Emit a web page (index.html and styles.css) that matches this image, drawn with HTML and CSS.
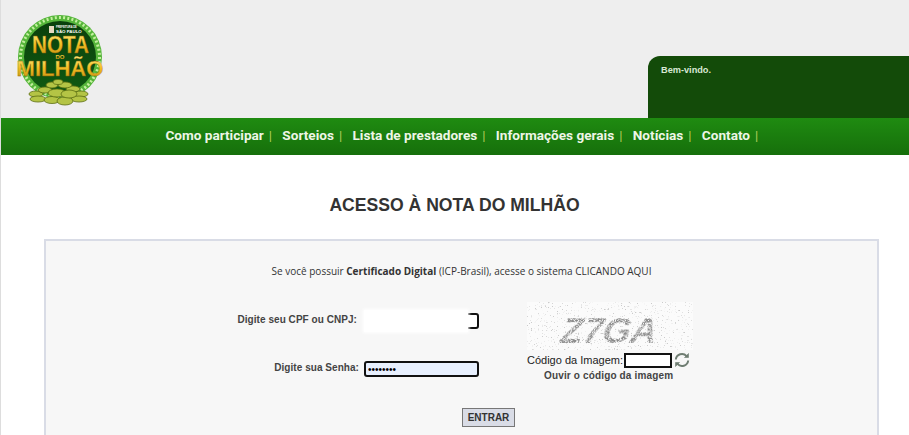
FILE: index.html
```html
<!DOCTYPE html>
<html lang="pt-BR">
<head>
    <meta charset="UTF-8">
    <meta name="viewport" content="width=device-width, initial-scale=1.0">
    <title>Nota do Milhão</title>
    <link rel="stylesheet" href="styles.css">
</head>
<body>
    <header class="topo">
        <svg class="logo" width="90" height="96" viewBox="0 0 90 96">
            <defs>
                <linearGradient id="ouro" x1="0" y1="0" x2="0" y2="1">
                    <stop offset="0" stop-color="#fdeb7c"/>
                    <stop offset="0.5" stop-color="#f0bc22"/>
                    <stop offset="1" stop-color="#c08a10"/>
                </linearGradient>
                <linearGradient id="fundo" x1="0" y1="0" x2="0" y2="1">
                    <stop offset="0" stop-color="#0a3f0c"/>
                    <stop offset="1" stop-color="#0f5a12"/>
                </linearGradient>
            </defs>
            <circle cx="45" cy="44" r="42" fill="#55b53a"/>
            <circle cx="45" cy="44" r="39.5" fill="none" stroke="#c4f0a0" stroke-width="3" stroke-dasharray="2 2.2"/>
            <circle cx="45" cy="44" r="36" fill="url(#fundo)"/>
            <rect x="34" y="13" width="5" height="7" fill="#e8d9c0"/>
            <text x="41" y="15" class="logo-pref">PREFEITURA DE</text>
            <text x="41" y="20" class="logo-sp">SÃO PAULO</text>
            <text x="45.5" y="40" class="logo-nota" fill="url(#ouro)" textLength="57" lengthAdjust="spacingAndGlyphs">NOTA</text>
            <text x="45" y="45.5" class="logo-do" fill="url(#ouro)">DO</text>
            <text x="45" y="63" class="logo-milhao" fill="url(#ouro)">MILHÃO</text>
            <g fill="#b4c445" stroke="#5d6f12" stroke-width="0.8">
                <ellipse cx="21" cy="81" rx="7" ry="3"/>
                <ellipse cx="23" cy="86" rx="8" ry="3"/>
                <ellipse cx="66" cy="81" rx="7" ry="3"/>
                <ellipse cx="64" cy="86" rx="8" ry="3"/>
                <ellipse cx="37" cy="87" rx="8" ry="3.5"/>
                <ellipse cx="50" cy="88" rx="8" ry="4"/>
                <ellipse cx="30" cy="77" rx="7" ry="3"/>
                <ellipse cx="58" cy="76" rx="7" ry="3"/>
                <ellipse cx="42" cy="80" rx="9" ry="4"/>
                <ellipse cx="54" cy="81" rx="8" ry="4"/>
                <ellipse cx="37" cy="72" rx="6" ry="3"/>
                <ellipse cx="50" cy="72" rx="7" ry="3"/>
                <ellipse cx="43" cy="69" rx="5" ry="2.5"/>
            </g>
        </svg>
        <div class="bem-vindo">Bem-vindo.</div>
    </header>

    <nav class="menu">
        <a href="#">Como participar</a>
        <a href="#">Sorteios</a>
        <a href="#">Lista de prestadores</a>
        <a href="#">Informações gerais</a>
        <a href="#">Notícias</a>
        <a href="#">Contato</a>
    </nav>

    <main class="conteudo">
        <h1>ACESSO À NOTA DO MILHÃO</h1>

        <form class="painel">
            <p class="certificado">Se você possuir <b>Certificado Digital</b> (ICP-Brasil), acesse o sistema CLICANDO AQUI</p>

            <div class="campos">
                <div class="dados">
                    <div class="linha">
                        <label>Digite seu CPF ou CNPJ:</label>
                        <span class="oculto">
                            <input class="caixa" type="text">
                            <span class="borrao"></span>
                        </span>
                    </div>
                    <div class="linha">
                        <label>Digite sua Senha:</label>
                        <input class="caixa senha" type="password" value="12345678">
                    </div>
                </div>

                <div class="captcha">
                    <svg width="166" height="48" viewBox="0 0 166 48">
                        <defs>
                            <filter id="ruido" x="0" y="0" width="100%" height="100%">
                                <feTurbulence type="fractalNoise" baseFrequency="0.7" numOctaves="2" seed="4"/>
                                <feColorMatrix values="0 0 0 0 0.6  0 0 0 0 0.6  0 0 0 0 0.6  3 6 0 0 -5.4"/>
                            </filter>
                            <filter id="granulado" x="-5%" y="-5%" width="110%" height="110%">
                                <feTurbulence type="fractalNoise" baseFrequency="0.9" numOctaves="1" seed="9" result="grao"/>
                                <feColorMatrix in="grao" values="0 0 0 0 0  0 0 0 0 0  0 0 0 0 0  9 0 0 0 -3.8" result="mascara"/>
                                <feComposite in="SourceGraphic" in2="mascara" operator="in"/>
                            </filter>
                        </defs>
                        <rect width="166" height="48" fill="#fbfbfb"/>
                        <rect width="166" height="48" filter="url(#ruido)"/>
                        <text x="34" y="41" class="captcha-texto" filter="url(#granulado)" transform="skewX(-18) translate(10 0)" textLength="96" lengthAdjust="spacingAndGlyphs">Z7GA</text>
                    </svg>
                    <div class="codigo">
                        <label>Código da Imagem:</label>
                        <input class="caixa curta" type="text">
                        <svg class="recarregar" width="16" height="16" viewBox="0 0 16 16" fill="none" stroke="#6f7d72" stroke-width="2">
                            <path d="M1.8 7.5a6.2 6.2 0 0 1 10.8-3.4"/>
                            <path d="M14.2 8.5a6.2 6.2 0 0 1-10.8 3.4"/>
                            <path d="M14.5 1.5v4h-4z" fill="#6f7d72" stroke-width="0.6"/>
                            <path d="M1.5 14.5v-4h4z" fill="#6f7d72" stroke-width="0.6"/>
                        </svg>
                    </div>
                    <a class="ouvir" href="#">Ouvir o código da imagem</a>
                </div>
            </div>

            <div class="acoes">
                <button type="button" class="entrar">ENTRAR</button>
            </div>
        </form>
    </main>
</body>
</html>
```

FILE: styles.css
```css
html, body {
    height: 435px;
    overflow: hidden;
}
body {
    margin: 0;
    background: #fff;
    font-family: "Liberation Sans", Arial, sans-serif;
    color: #333;
    border-left: 1px solid #ddd;
}
.topo {
    display: flex;
    justify-content: space-between;
    align-items: flex-end;
    height: 118px;
    background: #eee;
    position: relative;
}
.logo {
    position: absolute;
    left: 14px;
    top: 13px;
}
.logo text {
    text-anchor: middle;
    font-family: "Liberation Sans", sans-serif;
    font-weight: bold;
}
.logo .logo-pref, .logo .logo-sp {
    text-anchor: start;
    fill: #fff;
}
.logo .logo-pref { font-size: 2.6px; }
.logo .logo-sp { font-size: 4.4px; }
.logo .logo-nota {
    font-size: 23px;
    stroke: #8a6207;
    stroke-width: 0.3;
}
.logo .logo-do {
    font-size: 6px;
}
.logo .logo-milhao {
    font-size: 22px;
    stroke: #8a6207;
    stroke-width: 0.3;
}
.bem-vindo {
    box-sizing: border-box;
    width: 261px;
    height: 62px;
    margin-left: auto;
    padding: 9px 13px;
    background: #134b09;
    border-top-left-radius: 12px;
    color: #d8e8d4;
    font-size: 9.2px;
    font-weight: bold;
}
.menu {
    display: flex;
    justify-content: center;
    align-items: center;
    box-sizing: border-box;
    height: 37px;
    background: linear-gradient(#1f8b11, #166f0b);
    padding: 0 0 3px 24px;
}
.menu a {
    color: #eef6e6;
    font-family: Roboto, sans-serif;
    font-size: 13.6px;
    font-weight: bold;
    text-decoration: none;
    margin-right: 10.4px;
}
.menu a::after {
    content: "|";
    margin-left: 5px;
    color: #b6cf5a;
    font-weight: normal;
    font-size: 13px;
}
.conteudo {
    padding: 0 30px 0 43px;
}
h1 {
    margin: 0;
    padding: 39px 14px 0 0;
    height: 45px;
    text-align: center;
    font-size: 17.6px;
    line-height: 22px;
    color: #333;
}
.painel {
    box-sizing: border-box;
    height: 196px;
    background: #f7f7f7;
    border: 2px solid #d9dce6;
    border-bottom: none;
    padding: 22px 0 0;
}
.certificado {
    margin: 0;
    text-align: center;
    font-family: "Open Sans", sans-serif;
    font-size: 10px;
    line-height: 16px;
    color: #333;
}
.campos {
    display: flex;
    margin-top: 23px;
    height: 106px;
}
.dados {
    display: flex;
    flex-direction: column;
    gap: 32px;
    width: 433px;
    padding-top: 11px;
    box-sizing: border-box;
}
.linha {
    display: flex;
    justify-content: flex-end;
    align-items: center;
    gap: 5px;
}
.linha label, .ouvir {
    font-size: 10px;
    font-weight: bold;
    color: #444;
    letter-spacing: 0.05px;
}
.linha label {
    margin-bottom: 3px;
}
.caixa {
    box-sizing: border-box;
    width: 115px;
    height: 16px;
    padding: 0 2px;
    background: #fff;
    border: 2px solid #111;
    border-radius: 3px;
    outline: none;
    font-size: 10px;
}
.senha {
    background: #e8f0fe;
}
.oculto {
    display: block;
    position: relative;
    height: 16px;
    margin-left: 2px;
}
.oculto .caixa {
    display: block;
}
.borrao {
    position: absolute;
    left: 0;
    top: -3px;
    width: 104px;
    height: 22px;
    background: #fff;
    box-shadow: 0 0 3px 1px #fff;
}
.captcha {
    margin-left: 48px;
    display: flex;
    flex-direction: column;
    align-items: center;
    width: 166px;
}
.captcha-texto {
    font-family: "Liberation Sans", sans-serif;
    font-size: 36px;
    font-weight: bold;
    fill: #8a8a8a;
}
.codigo {
    display: flex;
    align-items: center;
    align-self: flex-start;
    margin-top: 2px;
    gap: 1px;
}
.codigo label {
    font-size: 11px;
    color: #222;
}
.curta {
    width: 48px;
    height: 15px;
    border-radius: 0;
}
.recarregar {
    margin-left: 1px;
}
.ouvir {
    margin-top: 2px;
    text-decoration: none;
    align-self: flex-start;
    margin-left: 17px;
    letter-spacing: 0.15px;
}
.acoes {
    padding-left: 416px;
}
.entrar {
    display: block;
    width: 53px;
    height: 19px;
    padding: 0;
    background: #d9dce6;
    border: 1px solid #777;
    font-family: "Liberation Sans", sans-serif;
    font-size: 10px;
    font-weight: bold;
    color: #333;
}
```
